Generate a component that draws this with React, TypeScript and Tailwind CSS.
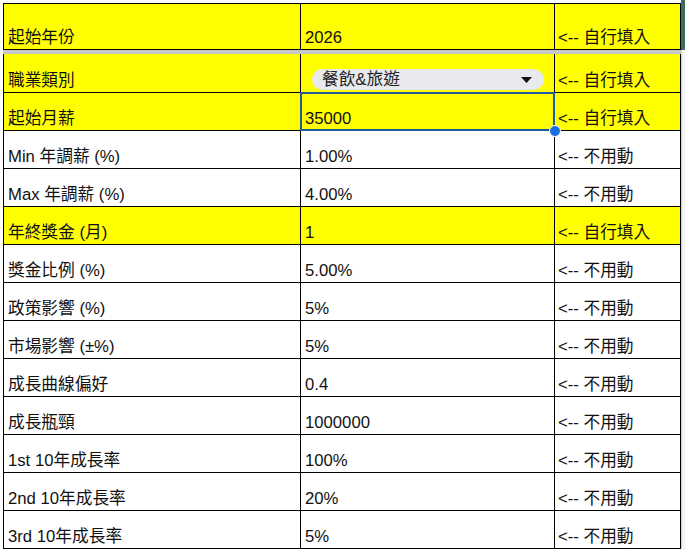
import React from 'react';

interface Row {
  label: string;
  value: string;
  note: string;
  yellow?: boolean;
}

const rows: Row[] = [
  { label: 'Min 年調薪 (%)', value: '1.00%', note: '<-- 不用動' },
  { label: 'Max 年調薪 (%)', value: '4.00%', note: '<-- 不用動' },
  { label: '年終獎金 (月)', value: '1', note: '<-- 自行填入', yellow: true },
  { label: '獎金比例 (%)', value: '5.00%', note: '<-- 不用動' },
  { label: '政策影響 (%)', value: '5%', note: '<-- 不用動' },
  { label: '市場影響 (±%)', value: '5%', note: '<-- 不用動' },
  { label: '成長曲線偏好', value: '0.4', note: '<-- 不用動' },
  { label: '成長瓶頸', value: '1000000', note: '<-- 不用動' },
  { label: '1st 10年成長率', value: '100%', note: '<-- 不用動' },
  { label: '2nd 10年成長率', value: '20%', note: '<-- 不用動' },
  { label: '3rd 10年成長率', value: '5%', note: '<-- 不用動' },
];

const font = { fontFamily: '"Liberation Sans", "Noto Sans CJK TC", sans-serif' };

const Cell: React.FC<{ w: string; yellow?: boolean; children?: React.ReactNode; pad?: string }> = ({ w, yellow, children, pad = 'pl-[4px]' }) => (
  <div
    className={`${w} shrink-0 border-r border-b border-black flex items-end pb-[1px] ${pad} ${yellow ? 'bg-[#ffff00]' : 'bg-white'}`}
  >
    <span className="text-[16.7px] leading-[20px] text-[#111] whitespace-nowrap">{children}</span>
  </div>
);

const App: React.FC = () => {
  return (
    <div className="w-[685px] h-[550px] bg-white relative overflow-hidden" style={font}>
      <div className="flex">
        <div className="w-[3px] shrink-0" />
        <div className="flex flex-col mt-[3px] border-l border-black">
          {/* frozen header row */}
          <div className="flex h-[47px] border-t border-black">
            <Cell w="w-[297px]" yellow>起始年份</Cell>
            <Cell w="w-[254px]" yellow>2026</Cell>
            <Cell w="w-[126px]" yellow pad="pl-[3px]">{'<-- 自行填入'}</Cell>
          </div>
          <div className="h-[4px] bg-[#c8c8c8] -ml-px" />

          {/* 職業類別 with dropdown chip */}
          <div className="flex h-[39px]">
            <Cell w="w-[297px]" yellow>職業類別</Cell>
            <div className="w-[254px] shrink-0 border-r border-b border-black bg-[#ffff00] flex items-end pb-[2px] pl-[11px] pr-[10px]">
              <div className="w-full h-[21px] rounded-full bg-[#e8eaed] flex items-center justify-between pl-[10px] pr-[12px]">
                <span className="text-[16.7px] leading-[20px] text-[#222]">餐飲&amp;旅遊</span>
                <svg width="11" height="6" viewBox="0 0 11 6">
                  <path d="M0 0 L11 0 L5.5 6 Z" fill="#111" />
                </svg>
              </div>
            </div>
            <Cell w="w-[126px]" yellow pad="pl-[3px]">{'<-- 自行填入'}</Cell>
          </div>

          {/* 起始月薪 with selected cell */}
          <div className="flex h-[38px]">
            <Cell w="w-[297px]" yellow>起始月薪</Cell>
            <div className="w-[254px] shrink-0 border-b border-r border-black bg-[#ffff00] relative">
              <div className="absolute -left-px -top-px right-[-1px] bottom-[-1px] border-2 border-[#245a9c] flex items-end pb-0 pl-[3px]">
                <span className="text-[16.7px] leading-[20px] text-[#111]">35000</span>
              </div>
              <div className="absolute right-[-7px] bottom-[-7px] w-[12px] h-[12px] rounded-full bg-[#1a6fe0] border border-white z-10" />
            </div>
            <Cell w="w-[126px]" yellow pad="pl-[3px]">{'<-- 自行填入'}</Cell>
          </div>

          {rows.map((r) => (
            <div key={r.label} className="flex h-[38px]">
              <Cell w="w-[297px]" yellow={r.yellow}>{r.label}</Cell>
              <Cell w="w-[254px]" yellow={r.yellow}>{r.value}</Cell>
              <Cell w="w-[126px]" yellow={r.yellow} pad="pl-[3px]">{r.note}</Cell>
            </div>
          ))}
        </div>
        <div className="flex flex-col w-[4px] shrink-0">
          <div className="h-[50px] bg-[#3f6e58]" />
          <div className="flex-1 border-l border-[#cfcfcf] bg-[#f3f3f3]" />
        </div>
      </div>
    </div>
  );
};

export default App;
